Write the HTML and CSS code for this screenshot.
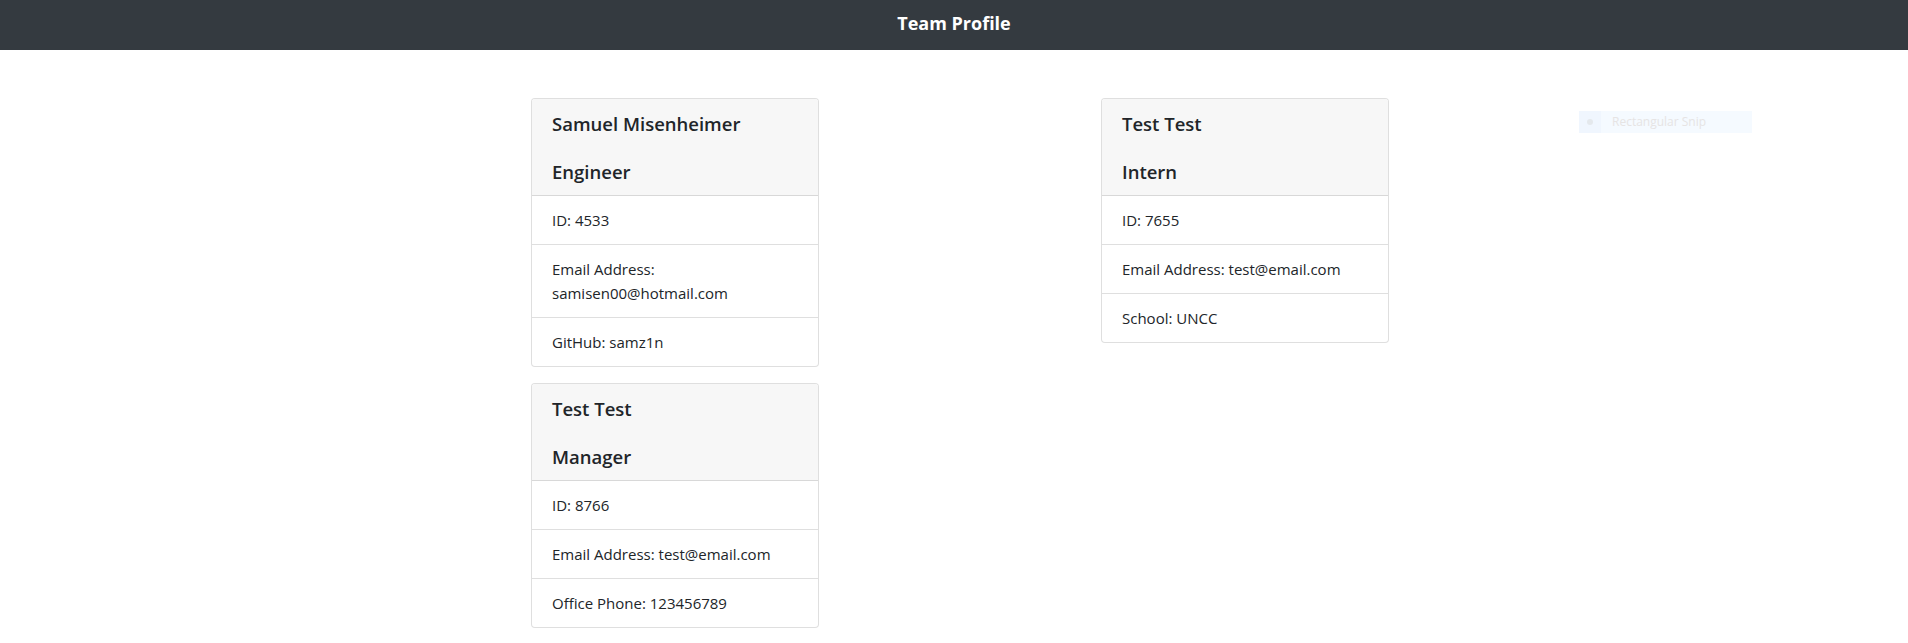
FILE: index.html
```html
<!DOCTYPE html>
<html lang="en">
<head>
<meta charset="UTF-8">
<title>Team Profile</title>
<link rel="stylesheet" href="styles.css">
</head>
<body>
<header class="topbar">
  <h1 class="topbar-title">Team Profile</h1>
</header>
<main class="team">
  <section class="col">
    <div class="card">
      <div class="card-header">
        <h5 class="card-name">Samuel Misenheimer</h5>
        <h5 class="card-role">Engineer</h5>
      </div>
      <ul class="list">
        <li class="item">ID: 4533</li>
        <li class="item">Email Address: samisen00@hotmail.com</li>
        <li class="item">GitHub: samz1n</li>
      </ul>
    </div>
    <div class="card">
      <div class="card-header">
        <h5 class="card-name">Test Test</h5>
        <h5 class="card-role">Manager</h5>
      </div>
      <ul class="list">
        <li class="item">ID: 8766</li>
        <li class="item">Email Address: test@email.com</li>
        <li class="item">Office Phone: 123456789</li>
      </ul>
    </div>
  </section>
  <section class="col">
    <div class="card">
      <div class="card-header">
        <h5 class="card-name">Test Test</h5>
        <h5 class="card-role">Intern</h5>
      </div>
      <ul class="list">
        <li class="item">ID: 7655</li>
        <li class="item">Email Address: test@email.com</li>
        <li class="item">School: UNCC</li>
      </ul>
    </div>
  </section>
</main>
<div class="snip"><span class="snip-dot"><span class="dot"></span></span><span class="snip-text">Rectangular Snip</span></div>
</body>
</html>
```

FILE: styles.css
```css
* { box-sizing: border-box; }
html, body {
  margin: 0;
  padding: 0;
  background: #fff;
}
body {
  font-family: "Open Sans", "Noto Sans", sans-serif;
  font-size: 15px;
  line-height: 24px;
  color: #212529;
  position: relative;
}
.topbar {
  background: #343a40;
  height: 50px;
  display: flex;
  align-items: center;
  justify-content: center;
}
.topbar-title {
  margin: 0;
  padding-bottom: 5px;
  color: #fff;
  font-size: 18px;
  font-weight: 700;
  line-height: 24px;
}
.team {
  display: flex;
  width: 1140px;
  margin: 48px 0 0 390px;
}
.col {
  width: 570px;
  display: flex;
  flex-direction: column;
  align-items: center;
}
.card {
  width: 288px;
  border: 1px solid rgba(0,0,0,0.125);
  border-radius: 4px;
  margin-bottom: 16px;
  overflow: hidden;
  background: #fff;
}
.card-header {
  background: #f7f7f7;
  padding: 13px 20px 11px;
  border-bottom: 1px solid rgba(0,0,0,0.125);
}
.card-header h5 {
  margin: 0;
  font-size: 18.5px;
  line-height: 24px;
  font-weight: 600;
  color: #212529;
}
.card-name { margin-bottom: 24px !important; }
.list {
  list-style: none;
  margin: 0;
  padding: 0;
}
.item {
  padding: 12px 20px;
  border-top: 1px solid rgba(0,0,0,0.125);
}
.item:first-child { border-top: 0; }
.snip {
  position: absolute;
  left: 1579px;
  top: 111px;
  width: 173px;
  height: 22px;
  background: #f5faff;
  display: flex;
  align-items: center;
  font-size: 12px;
  color: #e6e4e4;
}
.snip-dot {
  width: 22px;
  height: 22px;
  background: #f0f6fe;
  display: flex;
  align-items: center;
  justify-content: center;
}
.dot {
  width: 6px;
  height: 6px;
  border-radius: 50%;
  background: #e4e8ec;
}
.snip-text {
  margin-left: 11px;
}
```
